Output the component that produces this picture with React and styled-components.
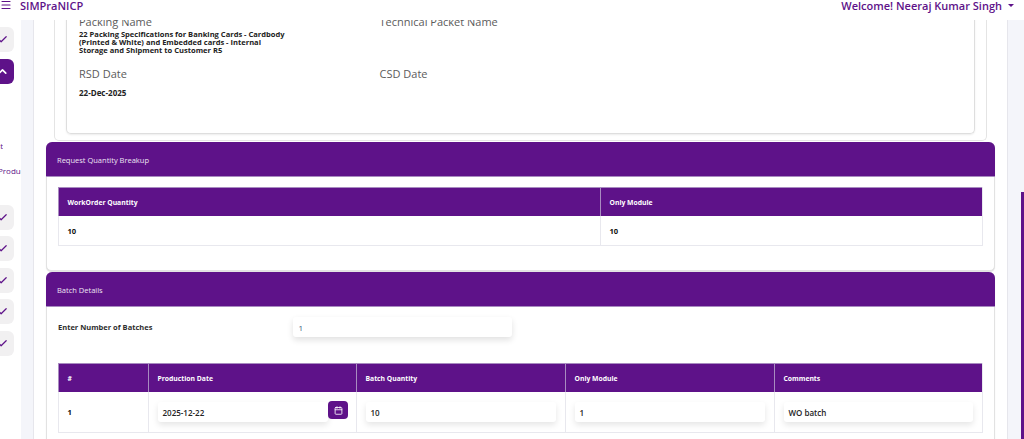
import React from 'react';
import styled, { createGlobalStyle } from 'styled-components';
import { Calendar, Check, ChevronUp, Menu } from 'lucide-react';

const PURPLE = '#5e1289';

const stepsBefore = [1];
const stepsAfter = [1, 2, 3, 4, 5];

const App = () => (
    <Page>
        <GlobalStyle />
        <TopBar>
            <Brand>
                <MenuIcon size={12} strokeWidth={2.2} />
                <BrandName>SIMPraNICP</BrandName>
            </Brand>
            <Welcome>
                Welcome! Neeraj Kumar Singh
                <Caret />
            </Welcome>
        </TopBar>
        <Body>
            <Rail>
                {stepsBefore.map(step => (
                    <StepButton key={step}>
                        <Check size={11} strokeWidth={2.6} />
                    </StepButton>
                ))}
                <StepButton active>
                    <ChevronUp size={13} strokeWidth={3} />
                </StepButton>
                <RailLinks>
                    <RailLink tail>Request</RailLink>
                    <RailLink>Product</RailLink>
                </RailLinks>
                {stepsAfter.map(step => (
                    <StepButton key={step}>
                        <Check size={11} strokeWidth={2.6} />
                    </StepButton>
                ))}
            </Rail>
            <Gutter left />
            <Main>
                <Scrolled>
                    <OuterPanel>
                        <InnerPanel>
                            <InfoGrid>
                                <InfoCell>
                                    <InfoLabel>Packing Name</InfoLabel>
                                    <InfoValue>
                                        22 Packing Specifications for Banking Cards - Cardbody (Printed &amp; White) and
                                        Embedded cards - Internal Storage and Shipment to Customer R5
                                    </InfoValue>
                                </InfoCell>
                                <InfoCell>
                                    <InfoLabel>Technical Packet Name</InfoLabel>
                                </InfoCell>
                                <InfoCell>
                                    <InfoLabel>RSD Date</InfoLabel>
                                    <InfoDate>22-Dec-2025</InfoDate>
                                </InfoCell>
                                <InfoCell>
                                    <InfoLabel>CSD Date</InfoLabel>
                                </InfoCell>
                            </InfoGrid>
                        </InnerPanel>
                    </OuterPanel>

                    <Card>
                        <CardHeader>Request Quantity Breakup</CardHeader>
                        <CardBody>
                            <Table columns="542px 1fr">
                                <HeadCell>WorkOrder Quantity</HeadCell>
                                <HeadCell>Only Module</HeadCell>
                                <ValueCell>10</ValueCell>
                                <ValueCell>10</ValueCell>
                            </Table>
                        </CardBody>
                    </Card>

                    <Card>
                        <CardHeader>Batch Details</CardHeader>
                        <BatchBody>
                            <BatchRow>
                                <BatchLabel>Enter Number of Batches</BatchLabel>
                                <BatchInput>1</BatchInput>
                            </BatchRow>
                            <Table columns="90px 208px 209px 209px 1fr">
                                <HeadCell>#</HeadCell>
                                <HeadCell>Production Date</HeadCell>
                                <HeadCell>Batch Quantity</HeadCell>
                                <HeadCell>Only Module</HeadCell>
                                <HeadCell>Comments</HeadCell>
                                <ValueCell tall>1</ValueCell>
                                <FieldCell>
                                    <Field>2025-12-22</Field>
                                    <DateButton>
                                        <Calendar size={9} strokeWidth={2.2} />
                                    </DateButton>
                                </FieldCell>
                                <FieldCell>
                                    <Field>10</Field>
                                </FieldCell>
                                <FieldCell>
                                    <Field>1</Field>
                                </FieldCell>
                                <FieldCell>
                                    <Field>WO batch</Field>
                                </FieldCell>
                            </Table>
                        </BatchBody>
                    </Card>
                </Scrolled>
            </Main>
            <Gutter />
            <ScrollTrack>
                <ScrollThumb />
            </ScrollTrack>
        </Body>
    </Page>
);

export default App;

const GlobalStyle = createGlobalStyle`
    html, body {
        margin: 0;
        padding: 0;
        height: 100%;
        overflow: hidden;
        background: #ffffff;
    }

    * {
        box-sizing: border-box;
    }
`;

const Page = styled.div`
    display: flex;
    flex-direction: column;
    width: 1024px;
    height: 439px;
    overflow: hidden;
    font-family: 'Open Sans', 'Noto Sans', sans-serif;
`;

const TopBar = styled.header`
    display: flex;
    flex: 0 0 20px;
    align-items: flex-start;
    justify-content: space-between;
    padding: 0 10px 0 0;
    height: 20px;
    color: ${PURPLE};
    background: #ffffff;
`;

const Brand = styled.div`
    display: flex;
    align-items: center;
    height: 10px;
`;

const MenuIcon = styled(Menu)`
    margin: 0 8px 0 0;
`;

const BrandName = styled.span`
    font-size: 11px;
    font-weight: 600;
    line-height: 11px;
`;

const Welcome = styled.div`
    display: flex;
    align-items: center;
    height: 10px;
    font-size: 11px;
    font-weight: 600;
    line-height: 11px;
`;

const Caret = styled.span`
    margin-left: 6px;
    border-top: 3px solid ${PURPLE};
    border-left: 3px solid transparent;
    border-right: 3px solid transparent;
`;

const Body = styled.div`
    display: flex;
    flex: 1;
    min-height: 0;
`;

const Rail = styled.nav`
    display: flex;
    flex: 0 0 21px;
    flex-direction: column;
    align-items: flex-end;
    gap: 6.5px;
    padding: 7px 7px 0 0;
    overflow: hidden;
`;

const StepButton = styled.div`
    display: flex;
    flex: 0 0 25px;
    align-items: center;
    justify-content: center;
    width: 24px;
    border-radius: 6px;
    color: ${props => (props.active ? '#ffffff' : PURPLE)};
    background: ${props => (props.active ? PURPLE : '#f1f0f1')};
`;

const RailLinks = styled.div`
    display: flex;
    flex: 0 0 108px;
    flex-direction: column;
    align-items: flex-start;
    gap: 12px;
    align-self: flex-start;
    padding-top: 49px;
`;

const RailLink = styled.span`
    width: ${props => (props.tail ? '3px' : '26px')};
    margin-left: ${props => (props.tail ? '0' : '-2px')};
    overflow: hidden;
    direction: ${props => (props.tail ? 'rtl' : 'ltr')};
    font-size: 8px;
    line-height: 13px;
    white-space: nowrap;
    color: ${PURPLE};
`;

const Gutter = styled.div`
    flex: 0 0 13px;
    background: #f4f5fa;
    border-right: ${props => (props.left ? '1px solid #e6e6ec' : 'none')};
    border-left: ${props => (props.left ? 'none' : '1px solid #e6e6ec')};
`;

const Main = styled.main`
    flex: 1;
    min-width: 0;
    overflow: hidden;
    background: #ffffff;
`;

const Scrolled = styled.div`
    margin-top: -6px;
    padding: 0 12px;
`;

const OuterPanel = styled.section`
    margin: 0 8px;
    padding: 0 11px 6px;
    border: 1px solid #e4e4e4;
    border-top: none;
    border-radius: 0 0 5px 5px;
`;

const InnerPanel = styled.div`
    height: 120px;
    padding: 0 12px;
    border: 1px solid #dedede;
    border-top: none;
    border-radius: 0 0 5px 5px;
    box-shadow: 0 1px 2px rgba(0, 0, 0, 0.08);
`;

const InfoGrid = styled.div`
    display: grid;
    grid-template-columns: 300.5px 1fr;
    grid-template-rows: 52px 40px;
`;

const InfoCell = styled.div`
    width: 210px;
`;

const InfoLabel = styled.div`
    font-size: 11px;
    line-height: 15px;
    color: #5b5b5b;
    white-space: nowrap;
`;

const InfoValue = styled.div`
    margin-top: 2px;
    font-size: 7.55px;
    font-weight: 700;
    line-height: 7.8px;
    color: #222222;
`;

const InfoDate = styled.div`
    margin-top: 7px;
    font-size: 8px;
    font-weight: 700;
    line-height: 9px;
    color: #222222;
`;

const Card = styled.section`
    margin-top: 1px;
    border: 1px solid #e2e2e2;
    border-radius: 6px 6px 5px 5px;
    background: #ffffff;
    box-shadow: 0 1px 1px rgba(0, 0, 0, 0.12);
`;

const CardHeader = styled.h2`
    display: flex;
    align-items: center;
    margin: -1px -1px 0;
    padding: 1px 11px 0;
    height: 35px;
    border-bottom: 1px solid #a88bc0;
    border-radius: 6px 6px 0 0;
    font-size: 7.5px;
    font-weight: 400;
    color: #ece3f2;
    background: ${PURPLE};
`;

const CardBody = styled.div`
    padding: 10px 11px 24px;
`;

const BatchBody = styled.div`
    padding: 10px 11px 20px;
`;

const Table = styled.div`
    display: grid;
    grid-template-columns: ${props => props.columns};
    border-right: 1px solid #e8e8ee;
    border-bottom: 1px solid #e8e8ee;
`;

const HeadCell = styled.div`
    display: flex;
    align-items: center;
    padding: 0 8.5px;
    height: 29px;
    border-left: 1px solid #a88bc0;
    border-top: 1px solid #a88bc0;
    font-size: 6.8px;
    font-weight: 700;
    color: #ffffff;
    background: ${PURPLE};
`;

const ValueCell = styled.div`
    display: flex;
    align-items: ${props => (props.tall ? 'flex-start' : 'center')};
    padding: ${props => (props.tall ? '15px 8.5px 0' : '0 8.5px')};
    height: ${props => (props.tall ? '40px' : '29px')};
    border-left: 1px solid #e8e8ee;
    font-size: 7.6px;
    font-weight: 700;
    color: #111111;
`;

const BatchRow = styled.div`
    display: flex;
    align-items: flex-start;
    height: 46px;
`;

const BatchLabel = styled.div`
    flex: 0 0 235px;
    padding-top: 5px;
    font-size: 7.5px;
    font-weight: 700;
    color: #2e2e2e;
`;

const BatchInput = styled.div`
    display: flex;
    align-items: center;
    padding: 0 5.5px;
    width: 219px;
    height: 20px;
    border-radius: 3px;
    font-size: 8px;
    color: #3d5a80;
    box-shadow: 0 3px 6px rgba(0, 0, 0, 0.12);
`;

const FieldCell = styled.div`
    display: flex;
    align-items: flex-start;
    padding: 10px 9px 0 8.5px;
    height: 40px;
    border-left: 1px solid #e8e8ee;
`;

const Field = styled.div`
    display: flex;
    flex: 1;
    align-items: center;
    padding: 0 5px;
    height: 20px;
    border-radius: 3px;
    font-size: 8px;
    font-weight: 600;
    color: #222222;
    box-shadow: 0 3px 6px rgba(0, 0, 0, 0.1);
`;

const DateButton = styled.div`
    display: flex;
    flex: 0 0 20px;
    align-items: center;
    justify-content: center;
    margin: -1px -1px 0 0;
    height: 18px;
    border-radius: 4px;
    color: #ffffff;
    background: ${PURPLE};
`;

const ScrollTrack = styled.div`
    display: flex;
    flex: 0 0 4px;
    flex-direction: column;
    padding: 172px 0 0 1px;
    background: #f4f5fa;
`;

const ScrollThumb = styled.div`
    flex: 1;
    background: ${PURPLE};
`;
